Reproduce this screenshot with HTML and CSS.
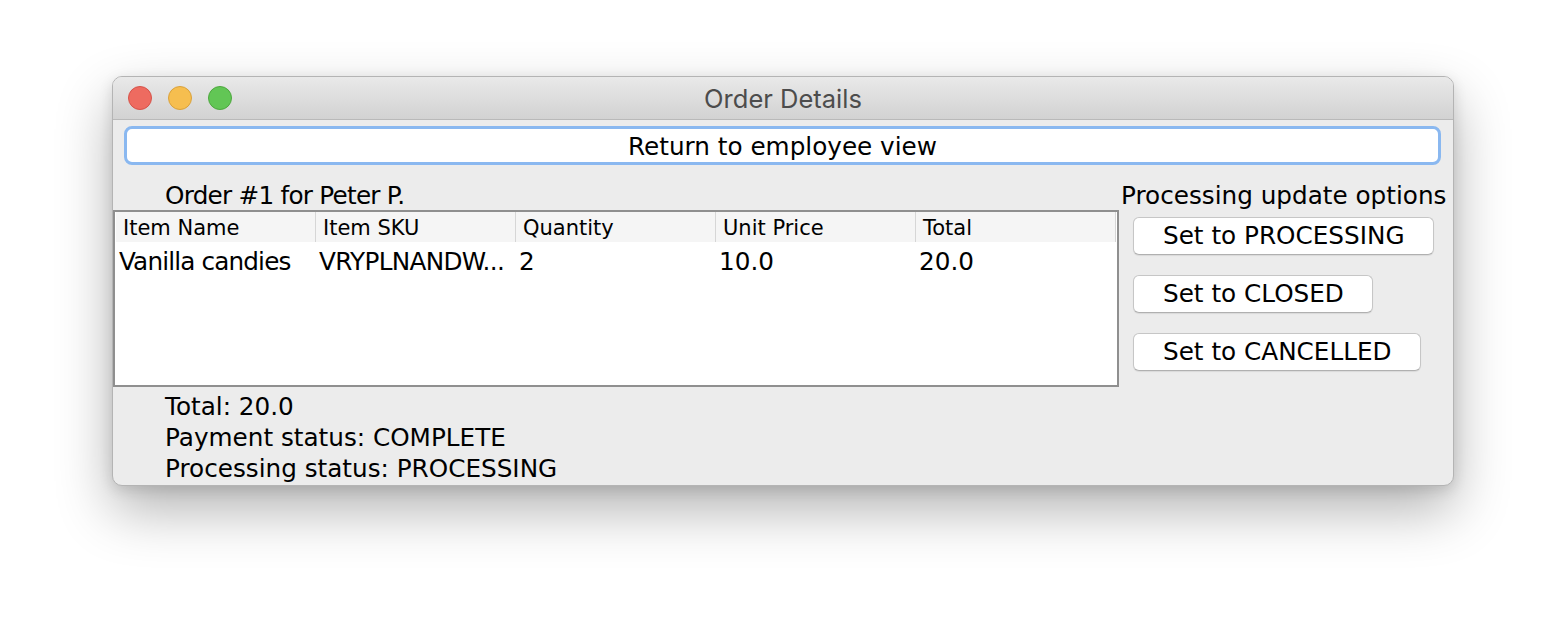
FILE: index.html
```html
<!DOCTYPE html>
<html>
<head>
<meta charset="utf-8">
<link rel="stylesheet" href="styles.css">
</head>
<body>
<div class="window">
  <div class="titlebar">
    <div class="lights">
      <span class="light red"></span>
      <span class="light yellow"></span>
      <span class="light green"></span>
    </div>
    <div class="title">Order Details</div>
    <div class="spacer"></div>
  </div>
  <div class="content">
    <button class="return-btn">Return to employee view</button>
    <div class="main">
      <div class="left">
        <div class="order-label">Order #1 for Peter P.</div>
        <div class="table-pane">
          <div class="thead">
            <div class="th">Item Name</div>
            <div class="th">Item SKU</div>
            <div class="th">Quantity</div>
            <div class="th">Unit Price</div>
            <div class="th">Total</div>
          </div>
          <div class="trow">
            <div class="td name">Vanilla candies</div>
            <div class="td sku">VRYPLNANDW...</div>
            <div class="td">2</div>
            <div class="td">10.0</div>
            <div class="td">20.0</div>
          </div>
        </div>
        <div class="info">
          <div class="info-line">Total: 20.0</div>
          <div class="info-line">Payment status: COMPLETE</div>
          <div class="info-line">Processing status: PROCESSING</div>
        </div>
      </div>
      <div class="right">
        <div class="opt-label">Processing update options</div>
        <div class="btns">
          <button class="btn">Set to PROCESSING</button>
          <button class="btn">Set to CLOSED</button>
          <button class="btn">Set to CANCELLED</button>
        </div>
      </div>
    </div>
  </div>
</div>
</body>
</html>
```

FILE: styles.css
```css
html, body {
  margin: 0;
  padding: 0;
  background: #ffffff;
}

body {
  width: 1566px;
  height: 634px;
  overflow: hidden;
}

.window {
  margin: 76px 0 0 112px;
  width: 1342px;
  height: 410px;
  box-sizing: border-box;
  border: 1px solid #b4b4b4;
  border-radius: 10px;
  background: #ececec;
  box-shadow: 0 24px 55px rgba(0, 0, 0, 0.3), 0 4px 14px rgba(0, 0, 0, 0.12);
  overflow: hidden;
  display: flex;
  flex-direction: column;
  font-family: "DejaVu Sans", sans-serif;
  font-size: 24.7px;
  color: #000;
}

.titlebar {
  height: 43px;
  flex: none;
  box-sizing: border-box;
  background: linear-gradient(#e9e9e9, #d2d2d2);
  border-bottom: 1px solid #b9b9b9;
  display: grid;
  grid-template-columns: 1fr auto 1fr;
  align-items: center;
}

.lights {
  display: flex;
  gap: 16px;
  padding-left: 15px;
}

.light {
  width: 24px;
  height: 24px;
  box-sizing: border-box;
  border-radius: 50%;
}

.red {
  background: #ee6b60;
  border: 1px solid #d5534a;
}

.yellow {
  background: #f6be4f;
  border: 1px solid #d9a13c;
}

.green {
  background: #62c655;
  border: 1px solid #4ea73f;
}

.title {
  font-family: Inter, "Liberation Sans", sans-serif;
  font-size: 25.5px;
  color: #4c4c4c;
}

.content {
  flex: 1;
  display: flex;
  flex-direction: column;
  padding-top: 6px;
}

.return-btn {
  margin: 0 12px 0 11px;
  height: 39px;
  box-sizing: border-box;
  background: #ffffff;
  border: 3px solid #8ab8f0;
  border-radius: 8px;
  font-family: inherit;
  font-size: inherit;
  color: #000;
  padding: 3px 0 0;
  line-height: 1;
}

.main {
  display: flex;
  gap: 2px;
}

.left {
  width: 1006px;
  flex: none;
}

.order-label {
  padding: 16px 0 0 52px;
  height: 29px;
  line-height: 29px;
  letter-spacing: -0.75px;
}

.table-pane {
  height: 177px;
  box-sizing: border-box;
  border: 2px solid #8f8f8f;
  background: #ffffff;
}

.thead {
  display: flex;
  height: 30px;
  margin: 0 0 0 1px;
  background: #f5f5f5;
  width: 1000px;
}

.th {
  width: 200px;
  box-sizing: border-box;
  padding: 2px 0 0 7px;
  font-size: 21px;
  line-height: 28px;
  border-right: 1px solid #d6d6d6;
}

.trow {
  display: flex;
  height: 34px;
  margin-left: 2px;
}

.td {
  width: 200px;
  padding: 2px 0 0 2px;
  box-sizing: border-box;
  line-height: 36px;
  white-space: nowrap;
}

.name {
  letter-spacing: -0.85px;
}

.sku {
  letter-spacing: -0.7px;
}

.info {
  padding: 4px 0 0 52px;
}

.info-line {
  line-height: 31px;
}

.right {
  flex: 1;
}

.opt-label {
  padding-top: 16px;
  height: 29px;
  line-height: 29px;
  white-space: nowrap;
}

.btns {
  display: flex;
  flex-direction: column;
  align-items: flex-start;
  gap: 20px;
  padding: 7px 0 0 12px;
}

.btn {
  height: 38px;
  box-sizing: border-box;
  background: #ffffff;
  border: 1px solid #c6c6c6;
  border-bottom-color: #b0b0b0;
  border-radius: 6px;
  box-shadow: 0 1px 1px rgba(0, 0, 0, 0.08);
  font-family: inherit;
  font-size: inherit;
  color: #000;
  padding: 1px 28px 0 29px;
  line-height: 1;
}
```
